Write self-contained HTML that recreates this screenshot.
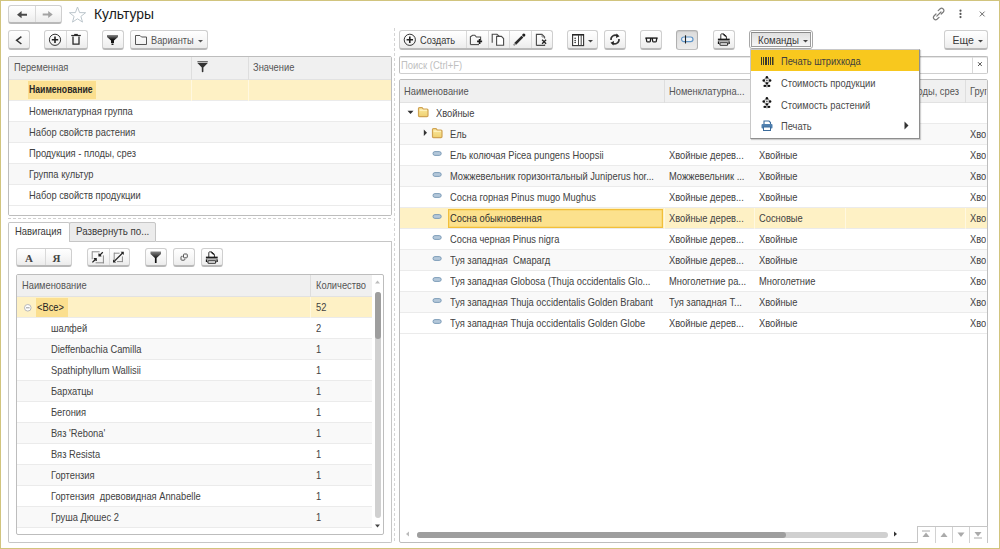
<!DOCTYPE html>
<html><head><meta charset="utf-8"><style>
*{box-sizing:border-box;margin:0;padding:0}
html,body{width:1000px;height:549px;overflow:hidden;background:#fff;font-family:"Liberation Sans",sans-serif;color:#404040}
.a{position:absolute}
.t{position:absolute;white-space:nowrap;line-height:12px;height:12px;transform-origin:0 0}
.btn{position:absolute;border:1px solid #cfcfcf;border-bottom:2px solid #b9b9b9;border-radius:3px;background:linear-gradient(#ffffff 0%,#f7f7f7 50%,#ececec 100%)}
.btn.pr{border:1px solid #b0b0b0;border-bottom:1px solid #c0c0c0;background:linear-gradient(#dcdcdc,#ebebeb);box-shadow:inset 0 1px 1px #c8c8c8}
.sep{position:absolute;top:0;bottom:0;width:1px;background:#d9d9d9}
</style></head><body>
<div class="a" style="left:0px;top:0px;width:1000px;height:549px;border:1px solid #d1c47e"></div>
<div class="btn" style="left:8px;top:5px;width:54px;height:19px"><div class="sep" style="left:26px"></div></div>
<svg class="a" style="left:16px;top:10px;" width="12" height="10" viewBox="0 0 12 10"><path d="M1 4.7 L5.6 1.1 L5.6 3.7 L11 3.7 L11 5.7 L5.6 5.7 L5.6 8.3 Z" fill="#4a4a4a"/></svg>
<svg class="a" style="left:42px;top:10px;" width="12" height="10" viewBox="0 0 12 10"><path d="M10.7 4.6 L6.2 1.1 L6.2 3.6 L0.7 3.6 L0.7 5.6 L6.2 5.6 L6.2 8.1 Z" fill="#a3a3a3"/></svg>
<svg class="a" style="left:69px;top:6px;" width="18" height="17" viewBox="0 0 18 17"><path d="M8.5 1 L10.6 6.6 L16.6 6.7 L11.9 10.4 L13.5 16.1 L8.5 12.8 L3.5 16.1 L5.1 10.4 L0.4 6.7 L6.4 6.6 Z" fill="none" stroke="#bcc6cc" stroke-width="1"/></svg>
<div class="t" style="left:93.50px;top:8.43px;font-size:15.5px;color:#1a1a1a;transform:scaleX(0.895);">Культуры</div>
<svg class="a" style="left:932px;top:7px;" width="14" height="14" viewBox="0 0 14 14"><g fill="none" stroke="#7a7a7a" stroke-width="1.2" stroke-linecap="round"><path d="M6.2 3.6 L8.2 1.8 Q9.6 0.6 11.2 2 Q12.6 3.5 11.3 5 L9.2 7"/><path d="M7 10.4 L5 12.2 Q3.6 13.4 2.1 12 Q0.7 10.6 2 9 L4 7"/><path d="M4.8 9.2 L9 5"/></g></svg>
<svg class="a" style="left:958px;top:9px;" width="5" height="10" viewBox="0 0 5 10"><circle cx="2.5" cy="1.7" r="1.1" fill="#555"/><circle cx="2.5" cy="4.9" r="1.1" fill="#555"/><circle cx="2.5" cy="8.1" r="1.1" fill="#555"/></svg>
<svg class="a" style="left:978px;top:10px;" width="8" height="8" viewBox="0 0 8 8"><path d="M1.8 1.6 L6.6 6.4 M6.6 1.6 L1.8 6.4" stroke="#6a6a6a" stroke-width="1"/></svg>
<div class="btn" style="left:8px;top:30px;width:22px;height:20px"></div>
<svg class="a" style="left:14px;top:35px;" width="10" height="10" viewBox="0 0 10 10"><path d="M7.4 1.6 L2.6 5.3 L7.4 9" fill="none" stroke="#333" stroke-width="1.5"/></svg>
<div class="btn" style="left:44px;top:30px;width:44px;height:20px"><div class="sep" style="left:21px"></div></div>
<svg class="a" style="left:48px;top:33px;" width="14" height="14" viewBox="0 0 14 14"><circle cx="7" cy="6.8" r="5.6" fill="none" stroke="#333" stroke-width="1"/><path d="M7 3.6 V10 M3.8 6.8 H10.2" stroke="#222" stroke-width="1.6"/></svg>
<svg class="a" style="left:70px;top:33px;" width="12" height="13" viewBox="0 0 12 13"><path d="M1.2 2.5 H10.8" stroke="#2a2a2a" stroke-width="1.2"/><path d="M4.2 1.5 H7.8" stroke="#2a2a2a" stroke-width="1.2"/><path d="M3 3.5 V11.2 H9 V3.5" fill="none" stroke="#2a2a2a" stroke-width="1.3"/></svg>
<div class="btn" style="left:102px;top:30px;width:22px;height:20px"></div>
<svg class="a" style="left:107px;top:35px;" width="12" height="11" viewBox="0 0 12 11"><defs><linearGradient id="fg" x1="0" y1="0" x2="0" y2="1"><stop offset="0" stop-color="#8a8a8a"/><stop offset="0.55" stop-color="#151515"/></linearGradient></defs><path d="M0 0 H11 V2 L7 5.5 V8 H4 V5.5 L0 2 Z" fill="url(#fg)"/><rect x="4.5" y="8.5" width="2" height="1.5" fill="#222"/></svg>
<div class="btn" style="left:130px;top:30px;width:78px;height:20px"></div>
<svg class="a" style="left:134px;top:34px;" width="14" height="12" viewBox="0 0 14 12"><path d="M1.5 10.5 V1.5 H6 L7.5 3 H12.5 V10.5 Z" fill="none" stroke="#555" stroke-width="1"/></svg>
<div class="t" style="left:151.00px;top:34.36px;font-size:10.5px;color:#555;transform:scaleX(0.88);">Варианты</div>
<svg class="a" style="left:197px;top:39px;" width="7" height="4" viewBox="0 0 7 4"><path d="M1 1 H6 L3.5 3.5 Z" fill="#555"/></svg>
<div class="a" style="left:8px;top:56px;width:384px;height:160px;border:1px solid #bdbdbd;background:#fff;overflow:hidden;border-radius:2px">
<div class="a" style="left:0px;top:0px;width:382px;height:23px;background:#f0f0f0;border-bottom:1px solid #e2e2e2"></div>
<div class="a" style="left:182px;top:0px;width:1px;height:23px;background:#dedede"></div>
<div class="a" style="left:239px;top:0px;width:1px;height:23px;background:#dedede"></div>
<div class="a" style="left:0px;top:23px;width:382px;height:21px;background:#fef1c5;border-bottom:1px solid #ebebeb"></div>
<div class="a" style="left:0px;top:44px;width:382px;height:21px;background:#ffffff;border-bottom:1px solid #ebebeb"></div>
<div class="a" style="left:0px;top:65px;width:382px;height:21px;background:#f8f8f8;border-bottom:1px solid #ebebeb"></div>
<div class="a" style="left:0px;top:86px;width:382px;height:21px;background:#ffffff;border-bottom:1px solid #ebebeb"></div>
<div class="a" style="left:0px;top:107px;width:382px;height:21px;background:#f8f8f8;border-bottom:1px solid #ebebeb"></div>
<div class="a" style="left:0px;top:128px;width:382px;height:21px;background:#ffffff;border-bottom:1px solid #ebebeb"></div>
<div class="a" style="left:0px;top:149px;width:382px;height:21px;background:#ffffff;border-bottom:1px solid #ebebeb"></div>
<div class="a" style="left:182px;top:23px;width:1px;height:21px;background:#fff8e0"></div>
<div class="a" style="left:239px;top:23px;width:1px;height:21px;background:#fff8e0"></div>
<div class="a" style="left:19px;top:24px;width:68px;height:18px;background:#fbdf8f"></div>
</div>
<div class="t" style="left:13.50px;top:62.46px;font-size:10.2px;color:#555;transform:scaleX(0.915);">Переменная</div>
<svg class="a" style="left:196px;top:60px;" width="13" height="14" viewBox="0 0 13 14"><rect x="1.4" y="1" width="10.4" height="1.4" fill="#6a6a6a"/><path d="M1.4 3 H11.8 L7.4 7.6 V11.6 Q7.4 12.3 6.6 12.3 Q5.8 12.3 5.8 11.6 V7.6 Z" fill="#333"/></svg>
<div class="t" style="left:252.50px;top:62.46px;font-size:10.2px;color:#555;transform:scaleX(0.915);">Значение</div>
<div class="t" style="left:28.50px;top:83.56px;font-size:10.2px;color:#262626;transform:scaleX(0.85);font-weight:bold">Наименование</div>
<div class="t" style="left:28.50px;top:105.56px;font-size:10.2px;color:#424242;transform:scaleX(0.915);">Номенклатурная группа</div>
<div class="t" style="left:28.50px;top:126.56px;font-size:10.2px;color:#424242;transform:scaleX(0.915);">Набор свойств растения</div>
<div class="t" style="left:28.50px;top:147.56px;font-size:10.2px;color:#424242;transform:scaleX(0.915);">Продукция - плоды, срез</div>
<div class="t" style="left:28.50px;top:168.56px;font-size:10.2px;color:#424242;transform:scaleX(0.915);">Группа культур</div>
<div class="t" style="left:28.50px;top:189.56px;font-size:10.2px;color:#424242;transform:scaleX(0.915);">Набор свойств продукции</div>
<div class="a" style="left:8px;top:218px;width:384px;height:1px;background:repeating-linear-gradient(90deg,#d0d0d0 0 3px,transparent 3px 5px)"></div>
<div class="a" style="left:8px;top:241px;width:384px;height:302px;border:1px solid #c6c6c6;border-top:none;border-radius:0 0 2px 2px"></div>
<div class="a" style="left:156px;top:241px;width:236px;height:1px;background:#c6c6c6"></div>
<div class="a" style="left:8px;top:222px;width:62px;height:20px;border:1px solid #c6c6c6;border-bottom:none;border-radius:2px 2px 0 0;background:#fff"></div>
<div class="a" style="left:69px;top:222px;width:87px;height:20px;border:1px solid #c6c6c6;border-radius:2px 2px 0 0;background:#ececec"></div>
<div class="t" style="left:15.00px;top:225.36px;font-size:10.5px;color:#3a3a3a;transform:scaleX(0.9);">Навигация</div>
<div class="t" style="left:76.00px;top:225.36px;font-size:10.5px;color:#3a3a3a;transform:scaleX(0.93);">Развернуть по...</div>
<div class="btn" style="left:16px;top:248px;width:56px;height:19px"><div class="sep" style="left:28px"></div></div>
<div class="t" style="left:25.00px;top:252.19px;font-size:11px;color:#444;font-family:'Liberation Serif',serif;font-weight:bold">А</div>
<div class="t" style="left:52.50px;top:252.19px;font-size:11px;color:#444;font-family:'Liberation Serif',serif;font-weight:bold">Я</div>
<div class="btn" style="left:87px;top:248px;width:43px;height:19px"><div class="sep" style="left:21px"></div></div>
<svg class="a" style="left:88px;top:248px;" width="40" height="18" viewBox="0 0 40 18"><path d="M4.2 3.8 H11.6 M4.2 3.3 V11.2 M15.4 7.4 V15.3 M7.6 14.8 H15.9" fill="none" stroke="#8a8a8a" stroke-width="1"/><path d="M14.8 4.2 L11.6 7.4 M4.4 14.4 L7.6 11.2" stroke="#222" stroke-width="1.3"/><path d="M10.4 8.6 V5.6 H11.2 L13.4 7.8 V8.6 Z M8.8 10 V13 H8 L5.8 10.8 V10 Z" fill="#222"/><path d="M26 5.2 H31.6 M26.2 4.7 V12 M34.4 8.4 V14.1 M29 13.6 H34.9" fill="none" stroke="#8a8a8a" stroke-width="1"/><path d="M26.2 13.4 L34.6 5" stroke="#222" stroke-width="1.3"/><path d="M25 14.6 V11.4 L28.2 14.6 Z M35.8 3.8 V7 L32.6 3.8 Z" fill="#222"/></svg>
<div class="btn" style="left:145px;top:248px;width:22px;height:19px"></div>
<svg class="a" style="left:150px;top:251px;" width="12" height="13" viewBox="0 0 12 13"><defs><linearGradient id="fg2" x1="0" y1="0" x2="0" y2="1"><stop offset="0" stop-color="#888"/><stop offset="0.6" stop-color="#111"/></linearGradient></defs><path d="M0.5 0.5 H11 V3 L6.6 7 V12 H4.9 V7 L0.5 3 Z" fill="url(#fg2)"/></svg>
<div class="btn" style="left:173px;top:248px;width:22px;height:19px"></div>
<svg class="a" style="left:179px;top:252px;" width="10" height="10" viewBox="0 0 10 10"><rect x="4.5" y="2" width="3.8" height="3.8" rx="0.8" fill="none" stroke="#555" stroke-width="1"/><path d="M3.6 4.3 H2.8 Q2 4.3 2 5.1 V7.4 Q2 8.2 2.8 8.2 H5 Q5.8 8.2 5.8 7.4 V6.7" fill="none" stroke="#555" stroke-width="1"/></svg>
<div class="btn" style="left:201px;top:248px;width:22px;height:19px"></div>
<svg class="a" style="left:205px;top:251px;" width="14" height="13" viewBox="0 0 14 13"><path d="M3.8 6 V1.6 Q3.8 0.9 4.5 0.9 H6.6 L9.4 3.3 V6" fill="#fff" stroke="#333" stroke-width="1"/><path d="M6.3 1.2 L9 3.6" stroke="#222" stroke-width="1.4"/><path d="M0.9 6.3 H12.7" stroke="#111" stroke-width="1.3"/><rect x="0.9" y="7" width="11.8" height="1.6" fill="#8a8a8a"/><path d="M1.5 8.4 V11 M12.1 8.4 V11" stroke="#111" stroke-width="1.3"/><rect x="2.9" y="9.7" width="7.8" height="2.5" rx="0.6" fill="#fff" stroke="#222" stroke-width="1.1"/></svg>
<div class="a" style="left:16px;top:274px;width:368px;height:261px;border:1px solid #bdbdbd;background:#fff;overflow:hidden;border-radius:2px">
<div class="a" style="left:0px;top:0px;width:355px;height:22px;background:#f0f0f0;border-bottom:1px solid #e2e2e2"></div>
<div class="a" style="left:293px;top:0px;width:1px;height:22px;background:#dedede"></div>
<div class="a" style="left:0px;top:22px;width:355px;height:21px;background:#fef1c5;border-bottom:1px solid #ebebeb"></div>
<div class="a" style="left:0px;top:43px;width:355px;height:21px;background:#ffffff;border-bottom:1px solid #ebebeb"></div>
<div class="a" style="left:0px;top:64px;width:355px;height:21px;background:#f9f9f9;border-bottom:1px solid #ebebeb"></div>
<div class="a" style="left:0px;top:85px;width:355px;height:21px;background:#ffffff;border-bottom:1px solid #ebebeb"></div>
<div class="a" style="left:0px;top:106px;width:355px;height:21px;background:#f9f9f9;border-bottom:1px solid #ebebeb"></div>
<div class="a" style="left:0px;top:127px;width:355px;height:21px;background:#ffffff;border-bottom:1px solid #ebebeb"></div>
<div class="a" style="left:0px;top:148px;width:355px;height:21px;background:#f9f9f9;border-bottom:1px solid #ebebeb"></div>
<div class="a" style="left:0px;top:169px;width:355px;height:21px;background:#ffffff;border-bottom:1px solid #ebebeb"></div>
<div class="a" style="left:0px;top:190px;width:355px;height:21px;background:#f9f9f9;border-bottom:1px solid #ebebeb"></div>
<div class="a" style="left:0px;top:211px;width:355px;height:21px;background:#ffffff;border-bottom:1px solid #ebebeb"></div>
<div class="a" style="left:0px;top:232px;width:355px;height:21px;background:#f9f9f9;border-bottom:1px solid #ebebeb"></div>
<div class="a" style="left:293px;top:22px;width:1px;height:21px;background:#fff8e0"></div>
<div class="a" style="left:19px;top:23px;width:32px;height:19px;background:#fbdf8f"></div>
</div>
<div class="t" style="left:21.50px;top:280.46px;font-size:10.2px;color:#555;transform:scaleX(0.915);">Наименование</div>
<div class="t" style="left:315.50px;top:280.46px;font-size:10.2px;color:#555;transform:scaleX(0.915);">Количество</div>
<svg class="a" style="left:374px;top:279px;" width="8" height="6" viewBox="0 0 8 6"><path d="M1 4.5 H6 L3.5 1.5 Z" fill="#bdbdbd"/></svg>
<div class="a" style="left:375px;top:292px;width:6px;height:226px;background:#d0d0d0;border-radius:3px"></div>
<div class="a" style="left:375px;top:292px;width:6px;height:47px;background:#9e9e9e;border-radius:3px"></div>
<svg class="a" style="left:374px;top:523px;" width="8" height="6" viewBox="0 0 8 6"><path d="M1 1.5 H6 L3.5 4.5 Z" fill="#444"/></svg>
<svg class="a" style="left:23px;top:303px;" width="10" height="10" viewBox="0 0 10 10"><circle cx="4.8" cy="4.8" r="3.3" fill="#fff" stroke="#b9b9b9" stroke-width="1"/><path d="M3 4.8 H6.6" stroke="#999" stroke-width="1"/></svg>
<div class="t" style="left:37.00px;top:301.56px;font-size:10.2px;color:#222;transform:scaleX(0.915);">&lt;Все&gt;</div>
<div class="t" style="left:315.50px;top:301.56px;font-size:10.2px;color:#424242;transform:scaleX(0.915);">52</div>
<div class="t" style="left:50.50px;top:322.56px;font-size:10.2px;color:#424242;transform:scaleX(0.915);">шалфей</div>
<div class="t" style="left:315.50px;top:322.56px;font-size:10.2px;color:#424242;transform:scaleX(0.915);">2</div>
<div class="t" style="left:50.50px;top:343.56px;font-size:10.2px;color:#424242;transform:scaleX(0.915);">Dieffenbachia Camilla</div>
<div class="t" style="left:315.50px;top:343.56px;font-size:10.2px;color:#424242;transform:scaleX(0.915);">1</div>
<div class="t" style="left:50.50px;top:364.56px;font-size:10.2px;color:#424242;transform:scaleX(0.915);">Spathiphyllum Wallisii</div>
<div class="t" style="left:315.50px;top:364.56px;font-size:10.2px;color:#424242;transform:scaleX(0.915);">1</div>
<div class="t" style="left:50.50px;top:385.56px;font-size:10.2px;color:#424242;transform:scaleX(0.915);">Бархатцы</div>
<div class="t" style="left:315.50px;top:385.56px;font-size:10.2px;color:#424242;transform:scaleX(0.915);">1</div>
<div class="t" style="left:50.50px;top:406.56px;font-size:10.2px;color:#424242;transform:scaleX(0.915);">Бегония</div>
<div class="t" style="left:315.50px;top:406.56px;font-size:10.2px;color:#424242;transform:scaleX(0.915);">1</div>
<div class="t" style="left:50.50px;top:427.56px;font-size:10.2px;color:#424242;transform:scaleX(0.915);">Вяз 'Rebona'</div>
<div class="t" style="left:315.50px;top:427.56px;font-size:10.2px;color:#424242;transform:scaleX(0.915);">1</div>
<div class="t" style="left:50.50px;top:448.56px;font-size:10.2px;color:#424242;transform:scaleX(0.915);">Вяз Resista</div>
<div class="t" style="left:315.50px;top:448.56px;font-size:10.2px;color:#424242;transform:scaleX(0.915);">1</div>
<div class="t" style="left:50.50px;top:469.56px;font-size:10.2px;color:#424242;transform:scaleX(0.915);">Гортензия</div>
<div class="t" style="left:315.50px;top:469.56px;font-size:10.2px;color:#424242;transform:scaleX(0.915);">1</div>
<div class="t" style="left:50.50px;top:490.56px;font-size:10.2px;color:#424242;transform:scaleX(0.915);">Гортензия&nbsp; древовидная Annabelle</div>
<div class="t" style="left:315.50px;top:490.56px;font-size:10.2px;color:#424242;transform:scaleX(0.915);">1</div>
<div class="t" style="left:50.50px;top:511.56px;font-size:10.2px;color:#424242;transform:scaleX(0.915);">Груша Дюшес 2</div>
<div class="t" style="left:315.50px;top:511.56px;font-size:10.2px;color:#424242;transform:scaleX(0.915);">1</div>
<div class="a" style="left:394px;top:28px;width:1px;height:513px;background:repeating-linear-gradient(180deg,#d4d4d4 0 3px,transparent 3px 5px)"></div>
<div class="btn" style="left:399px;top:30px;width:154px;height:20px"><div class="sep" style="left:66px"></div><div class="sep" style="left:88px"></div><div class="sep" style="left:109px"></div><div class="sep" style="left:131px"></div></div>
<svg class="a" style="left:403px;top:33px;" width="14" height="14" viewBox="0 0 14 14"><circle cx="6.8" cy="6.8" r="5.6" fill="none" stroke="#333" stroke-width="1"/><path d="M6.8 3.6 V10 M3.6 6.8 H10" stroke="#222" stroke-width="1.6"/></svg>
<div class="t" style="left:420.00px;top:33.96px;font-size:10.5px;color:#3a3a3a;transform:scaleX(0.88);">Создать</div>
<svg class="a" style="left:468px;top:32px;" width="40" height="16" viewBox="0 0 40 16"><path d="M2.4 12.6 V4.8 L4.6 3.2 H6.8 L8.4 5 H12.6 V8" fill="none" stroke="#4a4a4a" stroke-width="1.1"/><path d="M2.4 12.6 H11" stroke="#4a4a4a" stroke-width="1.1"/><path d="M11.6 6.9 V11.9 M9.1 9.4 H14.1" stroke="#1a1a1a" stroke-width="1.7"/><path d="M24.2 10.8 V2.3 H29 L31.3 4.4" fill="none" stroke="#4a4a4a" stroke-width="1.1"/><path d="M28.6 13.2 V4.4 H33.4 L35.6 6.6 V13.2 Z" fill="#fff" stroke="#4a4a4a" stroke-width="1.1"/></svg>
<svg class="a" style="left:510px;top:32px;" width="40" height="16" viewBox="0 0 40 16"><path d="M5.2 11.8 L12.4 4.6" stroke="#2a2a2a" stroke-width="2.6"/><path d="M3.6 13.4 L5.4 11.6" stroke="#9a9a9a" stroke-width="2"/><circle cx="13.8" cy="3.1" r="1.6" fill="#1e1e1e"/><path d="M26.4 13.4 V2.4 H32 L34.6 5 V6.6 M26.4 13.4 H34.6 V12.6" fill="none" stroke="#4a4a4a" stroke-width="1.1"/><path d="M32 2.4 V5 H34.6" fill="none" stroke="#777" stroke-width="0.8"/><path d="M32.1 7.8 L36.1 11.8 M36.1 7.8 L32.1 11.8" stroke="#222" stroke-width="1.3"/></svg>
<div class="btn" style="left:567px;top:30px;width:31px;height:20px"></div>
<svg class="a" style="left:571px;top:33px;" width="14" height="14" viewBox="0 0 14 14"><rect x="1.6" y="1.6" width="11" height="11" fill="#fff" stroke="#333" stroke-width="1.1"/><rect x="1.2" y="1.2" width="11.8" height="1.3" fill="#222"/><path d="M7.5 2 V12.5 M10.2 2 V12.5" stroke="#444" stroke-width="1"/><circle cx="4.1" cy="5.3" r="0.75" fill="#222"/><circle cx="4.1" cy="7.5" r="0.75" fill="#222"/><circle cx="4.1" cy="9.6" r="0.75" fill="#222"/></svg>
<svg class="a" style="left:588px;top:40px;" width="5" height="3" viewBox="0 0 5 3"><path d="M0 0 H5 L2.5 2.5 Z" fill="#444"/></svg>
<div class="btn" style="left:604px;top:30px;width:22px;height:20px"></div>
<svg class="a" style="left:609px;top:33px;" width="12" height="13" viewBox="0 0 12 13"><path d="M2 7 A4.3 4.3 0 0 1 8.5 2.8" fill="none" stroke="#333" stroke-width="1.6"/><path d="M7.5 0.5 L10.5 3.2 L7 5 Z" fill="#222"/><path d="M10 6 A4.3 4.3 0 0 1 3.5 10.2" fill="none" stroke="#333" stroke-width="1.6"/><path d="M4.5 12.5 L1.5 9.8 L5 8 Z" fill="#222"/></svg>
<div class="btn" style="left:640px;top:30px;width:22px;height:20px"></div>
<svg class="a" style="left:645px;top:36px;" width="13" height="7" viewBox="0 0 13 7"><path d="M0.3 2.2 H12.7" stroke="#333" stroke-width="0.9"/><path d="M1.2 2.2 H5.8 L5.3 5.2 Q5.1 5.8 4.4 5.8 H2.6 Q1.9 5.8 1.7 5.2 Z M7.2 2.2 H11.8 L11.3 5.2 Q11.1 5.8 10.4 5.8 H8.6 Q7.9 5.8 7.7 5.2 Z" fill="#fff" stroke="#1e1e1e" stroke-width="1.3"/></svg>
<div class="btn pr" style="left:676px;top:30px;width:22px;height:20px"></div>
<svg class="a" style="left:680px;top:35px;" width="14" height="9" viewBox="0 0 14 9"><rect x="1.5" y="2" width="11.5" height="4.6" rx="2.3" fill="#eef3f8" stroke="#5f95c8" stroke-width="1.2"/><path d="M5.5 0.3 V8.5" stroke="#222" stroke-width="1.1"/></svg>
<div class="btn" style="left:713px;top:30px;width:22px;height:20px"></div>
<svg class="a" style="left:717px;top:33px;" width="14" height="13" viewBox="0 0 14 13"><path d="M3.8 6 V1.6 Q3.8 0.9 4.5 0.9 H6.6 L9.4 3.3 V6" fill="#fff" stroke="#333" stroke-width="1"/><path d="M6.3 1.2 L9 3.6" stroke="#222" stroke-width="1.4"/><path d="M0.9 6.3 H12.7" stroke="#111" stroke-width="1.3"/><rect x="0.9" y="7" width="11.8" height="1.6" fill="#8a8a8a"/><path d="M1.5 8.4 V11 M12.1 8.4 V11" stroke="#111" stroke-width="1.3"/><rect x="2.9" y="9.7" width="7.8" height="2.5" rx="0.6" fill="#fff" stroke="#222" stroke-width="1.1"/></svg>
<div class="a" style="left:749px;top:30px;width:64px;height:19px;border:1px solid #a8a8a8;border-radius:3px;background:#fff"></div>
<div class="a" style="left:751px;top:32px;width:60px;height:15px;border:1px solid #9c9c9c;border-top:1px solid #8a8a8a;background:linear-gradient(#e0e0e0,#f6f6f6)"></div>
<div class="t" style="left:758.00px;top:33.96px;font-size:10.5px;color:#3a3a3a;transform:scaleX(0.92);">Команды</div>
<svg class="a" style="left:803px;top:40px;" width="5" height="3" viewBox="0 0 5 3"><path d="M0 0 H5 L2.5 2.5 Z" fill="#444"/></svg>
<div class="btn" style="left:944px;top:30px;width:44px;height:20px"></div>
<div class="t" style="left:952.50px;top:33.96px;font-size:10.5px;color:#3a3a3a;">Еще</div>
<svg class="a" style="left:978px;top:40px;" width="5" height="3" viewBox="0 0 5 3"><path d="M0 0 H5 L2.5 2.5 Z" fill="#444"/></svg>
<div class="a" style="left:399px;top:56px;width:589px;height:18px;border:1px solid #bdbdbd;border-bottom-color:#cfcfcf;border-radius:2px;background:#fff;box-shadow:inset 0 1px 0 #e6e6e6"></div>
<div class="a" style="left:972px;top:57px;width:1px;height:16px;background:#d8d8d8"></div>
<div class="t" style="left:400.50px;top:58.96px;font-size:10.5px;color:#c0c0c0;transform:scaleX(0.9);">Поиск (Ctrl+F)</div>
<svg class="a" style="left:977px;top:61px;" width="6" height="6" viewBox="0 0 6 6"><path d="M1 1.2 L4.8 5 M4.8 1.2 L1 5" stroke="#555" stroke-width="1"/></svg>
<div class="a" style="left:399px;top:79px;width:589px;height:464px;border:1px solid #bdbdbd;background:#fff;overflow:hidden;border-radius:2px">
<div class="a" style="left:0px;top:0px;width:587px;height:23px;background:#f0f0f0;border-bottom:1px solid #e2e2e2"></div>
<div class="a" style="left:264px;top:0px;width:1px;height:23px;background:#dedede"></div>
<div class="a" style="left:354px;top:0px;width:1px;height:23px;background:#dedede"></div>
<div class="a" style="left:445px;top:0px;width:1px;height:23px;background:#dedede"></div>
<div class="a" style="left:565px;top:0px;width:1px;height:23px;background:#dedede"></div>
<div class="a" style="left:0px;top:23px;width:587px;height:21px;background:#ffffff;border-bottom:1px solid #ebebeb"></div>
<div class="a" style="left:0px;top:44px;width:587px;height:21px;background:#f9f9f9;border-bottom:1px solid #ebebeb"></div>
<div class="a" style="left:0px;top:65px;width:587px;height:21px;background:#ffffff;border-bottom:1px solid #ebebeb"></div>
<div class="a" style="left:0px;top:86px;width:587px;height:21px;background:#f9f9f9;border-bottom:1px solid #ebebeb"></div>
<div class="a" style="left:0px;top:107px;width:587px;height:21px;background:#ffffff;border-bottom:1px solid #ebebeb"></div>
<div class="a" style="left:0px;top:128px;width:587px;height:21px;background:#fef1c5;border-bottom:1px solid #ebebeb"></div>
<div class="a" style="left:0px;top:149px;width:587px;height:21px;background:#ffffff;border-bottom:1px solid #ebebeb"></div>
<div class="a" style="left:0px;top:170px;width:587px;height:21px;background:#f9f9f9;border-bottom:1px solid #ebebeb"></div>
<div class="a" style="left:0px;top:191px;width:587px;height:21px;background:#ffffff;border-bottom:1px solid #ebebeb"></div>
<div class="a" style="left:0px;top:212px;width:587px;height:21px;background:#f9f9f9;border-bottom:1px solid #ebebeb"></div>
<div class="a" style="left:0px;top:233px;width:587px;height:21px;background:#ffffff;border-bottom:1px solid #ebebeb"></div>
<div class="a" style="left:264px;top:128px;width:1px;height:21px;background:#fff8e0"></div>
<div class="a" style="left:354px;top:128px;width:1px;height:21px;background:#fff8e0"></div>
<div class="a" style="left:445px;top:128px;width:1px;height:21px;background:#fff8e0"></div>
<div class="a" style="left:565px;top:128px;width:1px;height:21px;background:#fff8e0"></div>
<div class="a" style="left:48px;top:129px;width:215px;height:19px;background:#fce18d;border:1px solid #f2bf3a;box-shadow:inset 0 0 0 0.5px #f6d060"></div>
<div class="a" style="left:17px;top:452px;width:471px;height:6px;background:#d0d0d0;border-radius:3px"></div>
<div class="a" style="left:17px;top:452px;width:369px;height:6px;background:#9e9e9e;border-radius:3px"></div>
</div>
<div class="t" style="left:404.00px;top:86.26px;font-size:10.2px;color:#555;transform:scaleX(0.915);">Наименование</div>
<div class="t" style="left:668.50px;top:86.26px;font-size:10.2px;color:#555;transform:scaleX(0.915);">Номенклатурна...</div>
<div class="t" style="left:852.00px;top:86.26px;font-size:10.2px;color:#555;transform:scaleX(0.915);">Продукция - плоды, срез</div>
<div class="t" style="left:969.50px;top:86.26px;font-size:10.2px;color:#555;transform:scaleX(0.915);width:17.5px;overflow:hidden;">Группа культур</div>
<svg class="a" style="left:407px;top:110px;" width="7" height="5" viewBox="0 0 7 5"><path d="M0.5 0.8 H6.5 L3.5 4 Z" fill="#333"/></svg>
<svg class="a" style="left:417px;top:106px;" width="13" height="12" viewBox="0 0 13 12"><defs><linearGradient id="fo" x1="0" y1="0" x2="0" y2="1"><stop offset="0" stop-color="#fbeaa0"/><stop offset="1" stop-color="#efd070"/></linearGradient></defs><path d="M1.5 2.6 Q1.5 1.6 2.5 1.6 H5 L6.4 3.1 H10 Q11 3.1 11 4.1 V9.6 Q11 10.6 10 10.6 H2.5 Q1.5 10.6 1.5 9.6 Z" fill="url(#fo)" stroke="#d0a352" stroke-width="1.2"/><path d="M2.6 4.2 H10" stroke="#fff6cc" stroke-width="1"/></svg>
<svg class="a" style="left:423px;top:129px;" width="5" height="8" viewBox="0 0 5 8"><path d="M0.8 0.5 V7 L4 3.8 Z" fill="#333"/></svg>
<svg class="a" style="left:431px;top:127px;" width="13" height="12" viewBox="0 0 13 12"><path d="M1.5 2.6 Q1.5 1.6 2.5 1.6 H5 L6.4 3.1 H10 Q11 3.1 11 4.1 V9.6 Q11 10.6 10 10.6 H2.5 Q1.5 10.6 1.5 9.6 Z" fill="url(#fo)" stroke="#d0a352" stroke-width="1.2"/><path d="M2.6 4.2 H10" stroke="#fff6cc" stroke-width="1"/></svg>
<div class="t" style="left:436.00px;top:107.56px;font-size:10.2px;color:#424242;transform:scaleX(0.915);">Хвойные</div>
<div class="t" style="left:450.00px;top:128.56px;font-size:10.2px;color:#424242;transform:scaleX(0.915);">Ель</div>
<div class="t" style="left:969.50px;top:128.56px;font-size:10.2px;color:#424242;transform:scaleX(0.915);width:17.5px;overflow:hidden;">Хво</div>
<svg class="a" style="left:432px;top:151px;" width="10" height="5" viewBox="0 0 10 5"><rect x="1" y="0.6" width="8.2" height="3.8" rx="1.9" fill="#b4c8da" stroke="#7596b3" stroke-width="0.9"/></svg>
<div class="t" style="left:449.50px;top:149.56px;font-size:10.2px;color:#424242;transform:scaleX(0.915);">Ель колючая Picea pungens Hoopsii</div>
<div class="t" style="left:668.50px;top:149.56px;font-size:10.2px;color:#424242;transform:scaleX(0.915);">Хвойные дерев...</div>
<div class="t" style="left:758.50px;top:149.56px;font-size:10.2px;color:#424242;transform:scaleX(0.915);">Хвойные</div>
<div class="t" style="left:969.50px;top:149.56px;font-size:10.2px;color:#424242;transform:scaleX(0.915);width:17.5px;overflow:hidden;">Хво</div>
<svg class="a" style="left:432px;top:172px;" width="10" height="5" viewBox="0 0 10 5"><rect x="1" y="0.6" width="8.2" height="3.8" rx="1.9" fill="#b4c8da" stroke="#7596b3" stroke-width="0.9"/></svg>
<div class="t" style="left:449.50px;top:170.56px;font-size:10.2px;color:#424242;transform:scaleX(0.915);">Можжевельник горизонтальный Juniperus hor...</div>
<div class="t" style="left:668.50px;top:170.56px;font-size:10.2px;color:#424242;transform:scaleX(0.915);">Можжевельник ...</div>
<div class="t" style="left:758.50px;top:170.56px;font-size:10.2px;color:#424242;transform:scaleX(0.915);">Хвойные</div>
<div class="t" style="left:969.50px;top:170.56px;font-size:10.2px;color:#424242;transform:scaleX(0.915);width:17.5px;overflow:hidden;">Хво</div>
<svg class="a" style="left:432px;top:193px;" width="10" height="5" viewBox="0 0 10 5"><rect x="1" y="0.6" width="8.2" height="3.8" rx="1.9" fill="#b4c8da" stroke="#7596b3" stroke-width="0.9"/></svg>
<div class="t" style="left:449.50px;top:191.56px;font-size:10.2px;color:#424242;transform:scaleX(0.915);">Сосна горная Pinus mugo Mughus</div>
<div class="t" style="left:668.50px;top:191.56px;font-size:10.2px;color:#424242;transform:scaleX(0.915);">Хвойные дерев...</div>
<div class="t" style="left:758.50px;top:191.56px;font-size:10.2px;color:#424242;transform:scaleX(0.915);">Хвойные</div>
<div class="t" style="left:969.50px;top:191.56px;font-size:10.2px;color:#424242;transform:scaleX(0.915);width:17.5px;overflow:hidden;">Хво</div>
<svg class="a" style="left:432px;top:214px;" width="10" height="5" viewBox="0 0 10 5"><rect x="1" y="0.6" width="8.2" height="3.8" rx="1.9" fill="#b4c8da" stroke="#7596b3" stroke-width="0.9"/></svg>
<div class="t" style="left:449.50px;top:212.56px;font-size:10.2px;color:#2e2e2e;transform:scaleX(0.915);">Сосна обыкновенная</div>
<div class="t" style="left:668.50px;top:212.56px;font-size:10.2px;color:#424242;transform:scaleX(0.915);">Хвойные дерев...</div>
<div class="t" style="left:758.50px;top:212.56px;font-size:10.2px;color:#424242;transform:scaleX(0.915);">Сосновые</div>
<div class="t" style="left:969.50px;top:212.56px;font-size:10.2px;color:#424242;transform:scaleX(0.915);width:17.5px;overflow:hidden;">Хво</div>
<svg class="a" style="left:432px;top:235px;" width="10" height="5" viewBox="0 0 10 5"><rect x="1" y="0.6" width="8.2" height="3.8" rx="1.9" fill="#b4c8da" stroke="#7596b3" stroke-width="0.9"/></svg>
<div class="t" style="left:449.50px;top:233.56px;font-size:10.2px;color:#424242;transform:scaleX(0.915);">Сосна черная Pinus nigra</div>
<div class="t" style="left:668.50px;top:233.56px;font-size:10.2px;color:#424242;transform:scaleX(0.915);">Хвойные дерев...</div>
<div class="t" style="left:758.50px;top:233.56px;font-size:10.2px;color:#424242;transform:scaleX(0.915);">Хвойные</div>
<div class="t" style="left:969.50px;top:233.56px;font-size:10.2px;color:#424242;transform:scaleX(0.915);width:17.5px;overflow:hidden;">Хво</div>
<svg class="a" style="left:432px;top:256px;" width="10" height="5" viewBox="0 0 10 5"><rect x="1" y="0.6" width="8.2" height="3.8" rx="1.9" fill="#b4c8da" stroke="#7596b3" stroke-width="0.9"/></svg>
<div class="t" style="left:449.50px;top:254.56px;font-size:10.2px;color:#424242;transform:scaleX(0.915);">Туя западная&nbsp; Смарагд</div>
<div class="t" style="left:668.50px;top:254.56px;font-size:10.2px;color:#424242;transform:scaleX(0.915);">Хвойные дерев...</div>
<div class="t" style="left:758.50px;top:254.56px;font-size:10.2px;color:#424242;transform:scaleX(0.915);">Хвойные</div>
<div class="t" style="left:969.50px;top:254.56px;font-size:10.2px;color:#424242;transform:scaleX(0.915);width:17.5px;overflow:hidden;">Хво</div>
<svg class="a" style="left:432px;top:277px;" width="10" height="5" viewBox="0 0 10 5"><rect x="1" y="0.6" width="8.2" height="3.8" rx="1.9" fill="#b4c8da" stroke="#7596b3" stroke-width="0.9"/></svg>
<div class="t" style="left:449.50px;top:275.56px;font-size:10.2px;color:#424242;transform:scaleX(0.915);">Туя западная Globosa (Thuja occidentalis Glo...</div>
<div class="t" style="left:668.50px;top:275.56px;font-size:10.2px;color:#424242;transform:scaleX(0.915);">Многолетние ра...</div>
<div class="t" style="left:758.50px;top:275.56px;font-size:10.2px;color:#424242;transform:scaleX(0.915);">Многолетние</div>
<div class="t" style="left:969.50px;top:275.56px;font-size:10.2px;color:#424242;transform:scaleX(0.915);width:17.5px;overflow:hidden;">Хво</div>
<svg class="a" style="left:432px;top:298px;" width="10" height="5" viewBox="0 0 10 5"><rect x="1" y="0.6" width="8.2" height="3.8" rx="1.9" fill="#b4c8da" stroke="#7596b3" stroke-width="0.9"/></svg>
<div class="t" style="left:449.50px;top:296.56px;font-size:10.2px;color:#424242;transform:scaleX(0.915);">Туя западная Thuja occidentalis Golden Brabant</div>
<div class="t" style="left:668.50px;top:296.56px;font-size:10.2px;color:#424242;transform:scaleX(0.915);">Туя западная Т...</div>
<div class="t" style="left:758.50px;top:296.56px;font-size:10.2px;color:#424242;transform:scaleX(0.915);">Хвойные</div>
<div class="t" style="left:969.50px;top:296.56px;font-size:10.2px;color:#424242;transform:scaleX(0.915);width:17.5px;overflow:hidden;">Хво</div>
<svg class="a" style="left:432px;top:319px;" width="10" height="5" viewBox="0 0 10 5"><rect x="1" y="0.6" width="8.2" height="3.8" rx="1.9" fill="#b4c8da" stroke="#7596b3" stroke-width="0.9"/></svg>
<div class="t" style="left:449.50px;top:317.56px;font-size:10.2px;color:#424242;transform:scaleX(0.915);">Туя западная Thuja occidentalis Golden Globe</div>
<div class="t" style="left:668.50px;top:317.56px;font-size:10.2px;color:#424242;transform:scaleX(0.915);">Хвойные дерев...</div>
<div class="t" style="left:758.50px;top:317.56px;font-size:10.2px;color:#424242;transform:scaleX(0.915);">Хвойные</div>
<div class="t" style="left:969.50px;top:317.56px;font-size:10.2px;color:#424242;transform:scaleX(0.915);width:17.5px;overflow:hidden;">Хво</div>
<div class="a" style="left:917px;top:526px;width:71px;height:17px;border:1px solid #c6c6c6;border-bottom:none;background:#fff"></div>
<div class="a" style="left:935px;top:527px;width:1px;height:16px;background:#d2d2d2"></div>
<div class="a" style="left:952px;top:527px;width:1px;height:16px;background:#d2d2d2"></div>
<div class="a" style="left:969px;top:527px;width:1px;height:16px;background:#d2d2d2"></div>
<svg class="a" style="left:921px;top:530px;" width="10" height="9" viewBox="0 0 10 9"><path d="M1 1 H9" stroke="#aaa" stroke-width="1"/><path d="M1.5 7 H8.5 L5 2.5 Z" fill="#aaa"/></svg>
<svg class="a" style="left:939px;top:530px;" width="10" height="9" viewBox="0 0 10 9"><path d="M1.5 7 H8.5 L5 2.5 Z" fill="#aaa"/></svg>
<svg class="a" style="left:956px;top:530px;" width="10" height="9" viewBox="0 0 10 9"><path d="M1.5 2.5 H8.5 L5 7 Z" fill="#aaa"/></svg>
<svg class="a" style="left:973px;top:530px;" width="10" height="9" viewBox="0 0 10 9"><path d="M1.5 2 H8.5 L5 6.5 Z" fill="#aaa"/><path d="M1 8 H9" stroke="#aaa" stroke-width="1"/></svg>
<svg class="a" style="left:405px;top:531px;" width="5" height="6" viewBox="0 0 5 6"><path d="M4 0.5 V5.5 L1 3 Z" fill="#bbb"/></svg>
<svg class="a" style="left:893px;top:531px;" width="5" height="6" viewBox="0 0 5 6"><path d="M1 0.5 V5.5 L4 3 Z" fill="#333"/></svg>
<div class="a" style="left:750px;top:49px;width:170px;height:90px;background:#fff;border:1px solid #c8c8c8;border-right:1px solid #8e8e8e;border-bottom:1px solid #8e8e8e;box-shadow:1px 1px 1px rgba(0,0,0,0.18)"></div>
<div class="a" style="left:751px;top:50px;width:168px;height:21px;background:#f8c81e"></div>
<svg class="a" style="left:761px;top:57px;" width="13" height="8" viewBox="0 0 13 8"><rect x="0" y="0" width="1" height="8" fill="#3a3a2a"/><rect x="2" y="0" width="1" height="8" fill="#3a3a2a"/><rect x="4" y="0" width="2" height="8" fill="#3a3a2a"/><rect x="7" y="0" width="1" height="8" fill="#2a3050"/><rect x="9" y="0" width="1" height="8" fill="#3a3a2a"/><rect x="11" y="0" width="1.5" height="8" fill="#3a3a2a"/></svg>
<div class="t" style="left:781.00px;top:56.06px;font-size:10.2px;color:#3e3e3e;transform:scaleX(0.915);">Печать штрихкода</div>
<svg class="a" style="left:761px;top:75px;" width="12" height="14" viewBox="0 0 12 14"><circle cx="5.9" cy="5.4" r="2.4" fill="#fff" stroke="#909090" stroke-width="1.1"/><circle cx="5.9" cy="5.4" r="0.9" fill="#666"/><circle cx="5.9" cy="2.2" r="1.25" fill="#111"/><circle cx="2.7" cy="5.4" r="1.25" fill="#111"/><circle cx="9.1" cy="5.4" r="1.25" fill="#111"/><circle cx="5.9" cy="8.6" r="1.25" fill="#111"/><path d="M5.9 9.2 V12.6" stroke="#999" stroke-width="1.2"/><ellipse cx="3.9" cy="10.9" rx="1.5" ry="1.1" fill="#111"/><ellipse cx="7.9" cy="10.9" rx="1.5" ry="1.1" fill="#111"/></svg>
<div class="t" style="left:781.00px;top:78.36px;font-size:10.2px;color:#4a4a4a;transform:scaleX(0.915);">Стоимость продукции</div>
<svg class="a" style="left:761px;top:96px;" width="12" height="14" viewBox="0 0 12 14"><circle cx="5.9" cy="5.4" r="2.4" fill="#fff" stroke="#909090" stroke-width="1.1"/><circle cx="5.9" cy="5.4" r="0.9" fill="#666"/><circle cx="5.9" cy="2.2" r="1.25" fill="#111"/><circle cx="2.7" cy="5.4" r="1.25" fill="#111"/><circle cx="9.1" cy="5.4" r="1.25" fill="#111"/><circle cx="5.9" cy="8.6" r="1.25" fill="#111"/><path d="M5.9 9.2 V12.6" stroke="#999" stroke-width="1.2"/><ellipse cx="3.9" cy="10.9" rx="1.5" ry="1.1" fill="#111"/><ellipse cx="7.9" cy="10.9" rx="1.5" ry="1.1" fill="#111"/></svg>
<div class="t" style="left:781.00px;top:99.76px;font-size:10.2px;color:#4a4a4a;transform:scaleX(0.915);">Стоимость растений</div>
<svg class="a" style="left:761px;top:120px;" width="12" height="11" viewBox="0 0 12 11"><path d="M3 4 V1 H8 L9.5 2.5 V4" fill="none" stroke="#3c6c9c" stroke-width="1.1"/><rect x="0.5" y="4" width="11" height="4.5" rx="1" fill="#4f7fae"/><rect x="2.5" y="7" width="7" height="3.5" fill="#fff" stroke="#3c6c9c" stroke-width="1"/></svg>
<div class="t" style="left:781.00px;top:121.36px;font-size:10.2px;color:#4a4a4a;transform:scaleX(0.915);">Печать</div>
<svg class="a" style="left:904px;top:121px;" width="5" height="9" viewBox="0 0 5 9"><path d="M0.5 0.5 V8.5 L4.5 4.5 Z" fill="#333"/></svg>
</body></html>
